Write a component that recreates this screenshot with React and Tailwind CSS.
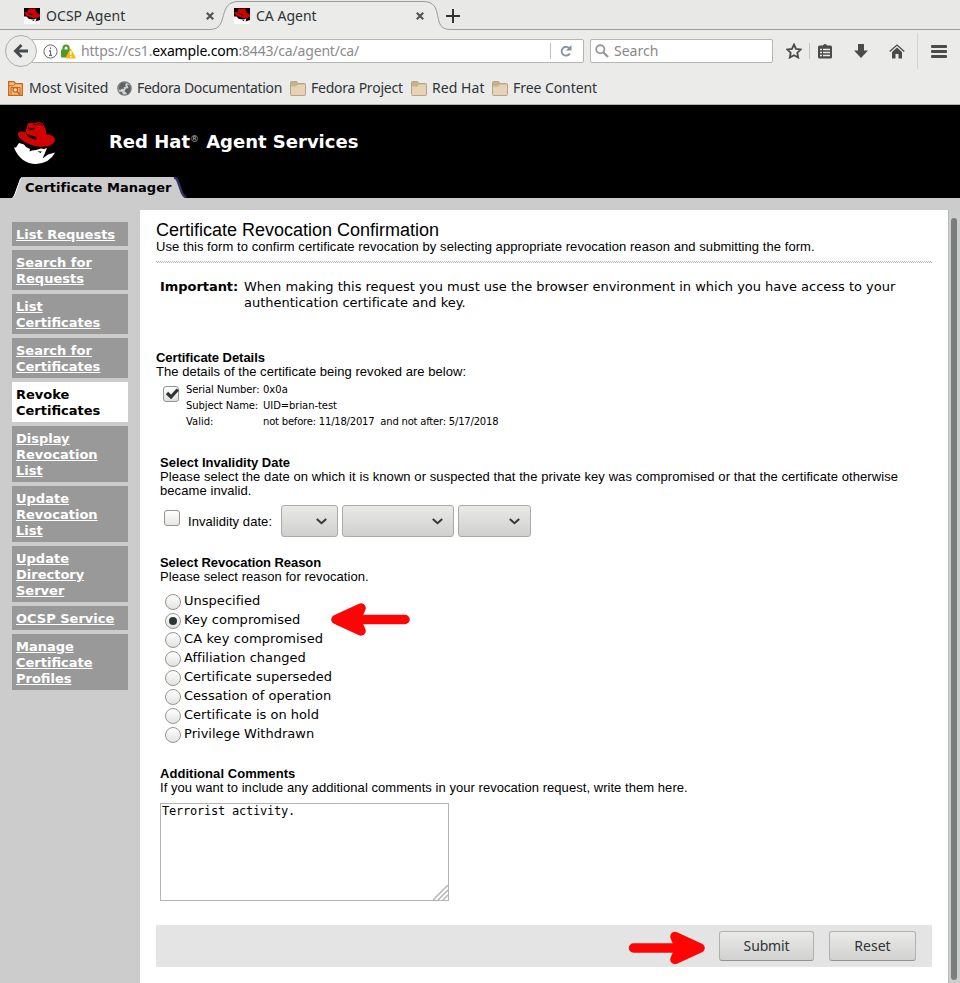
import React from "react";

const UI = "font-['Noto_Sans',sans-serif]";
const DJ = "font-['DejaVu_Sans',sans-serif]";
const ARIAL = "font-['Liberation_Sans',sans-serif]";

function Hat({ className }) {
  return (
    <svg viewBox="0 0 42 42" className={className}>
      <path fill="#fff" d="M0 25.500 L2 25.500 L5 21 L10 22.500 L12 25 L16 27 L15.500 29.500 L18 28.500 L22 28 L27 26.500 L30 27 L33 26 L31 31 L28.500 36.500 L34 32.500 L41 30.500 Q36 41 22 42 C12 42 4 36 0 25.500 Z" />
      <path fill="#d50000" d="M13.500 2 C16 0 18 1.500 21 1 C24 -.3 28 -.2 29.500 2.500 C31 6 32.500 9 32.500 12.500 C37 12.500 41 14.500 41 18 C40 23 34 24.700 28 24.700 C18 25 6 19 4 13 C3.500 9.500 7 8.500 11.500 10.500 Z" />
      <path d="M11.500 10.500 C14 13.500 19 13.500 22 15 C25 18.500 19 17.500 17 16 C14 15 12.500 13.500 11.500 10.500Z M14 4.500 L15.500 6.500 L21 5.500 L20.500 7 L17.500 8 L14 7Z M23.500 29.200 L28 29.500 L26.500 31Z" />
      <path d="M19 1.800 Q22 4 25.500 1.800 L29 3.500" stroke="#000" strokeWidth=".8" fill="none" />
    </svg>
  );
}

function Favicon() {
  return (
    <div className="h-4 w-4 shrink-0 overflow-hidden bg-black">
      <svg viewBox="0 0 16 16" className="h-4 w-4">
        <path fill="#fff" d="M0 8.500 L2.500 8.500 L5 11 L9 11.500 L12.500 10.500 L11.500 13.500 L16 12 V16 H0Z" />
        <path fill="#d00000" d="M4.500 .5 L8 1 L11 .3 L13 5 L16 6.500 V8.500 L13 10 H9 L3 8 L0 5 L1 4 L3.500 4.300Z" />
        <path d="M4 4.500 L6 5.500 L9 6.300 L8 7.200 L5 6.300Z M8 12 L11 11.800 L9.500 13Z" />
      </svg>
    </div>
  );
}

const Close = () => (
  <svg viewBox="0 0 8 8" className="h-2 w-2 shrink-0">
    <path d="M.8 .8 L7.200 7.200 M7.200 .8 L.8 7.200" stroke="#50565a" strokeWidth="2.200" />
  </svg>
);

const Folder = () => (
  <svg viewBox="0 0 16 15" className="h-[15px] w-4 shrink-0">
    <path d="M.5 1.500 Q.5 .5 1.500 .5 H6.500 L8 2.500 H14.500 Q15.500 2.500 15.500 3.500 V13.500 Q15.500 14.500 14.500 14.500 H1.500 Q.5 14.500 .5 13.500Z" fill="#c4b290" stroke="#b6a583" />
    <path d="M1 5.500 H6 L8 3.500 H15 V14 H1Z" fill="#e6d2b5" />
  </svg>
);

const MostVisited = () => (
  <svg viewBox="0 0 15 15" className="h-[15px] w-[15px] shrink-0" fill="none">
    <path d="M.7 .7 H6 L7.500 2.700 H14.300 V14.300 H.7Z" fill="#f3bd88" stroke="#cb6510" strokeWidth="1.300" />
    <path d="M1 4.700 H5.500 L7 2.800 M3 13.500 V6.500 H12 V13.500" stroke="#cb6510" />
    <circle cx="7.300" cy="8.800" r="2.300" stroke="#cb6510" strokeWidth="1.300" fill="#fbe4cc" />
    <path d="M9 10.500 L12 13.500" stroke="#cb6510" strokeWidth="1.600" />
  </svg>
);

const Globe = () => (
  <svg viewBox="0 0 15 15" className="h-[15px] w-[15px] shrink-0">
    <circle cx="7.500" cy="7.500" r="6.700" fill="#cfd0d0" stroke="#77797b" strokeWidth="1.200" />
    <path d="M2 5 L4 2 L7 1.300 L9.500 2 L8 4 L9 5.500 L6.500 6.500 L7 8 L5 7.800 L3 9 L1.500 8Z M10 3.500 L12.500 4 L14 7 L13 11 L10.500 13.500 L9 11.500 L7.500 10 L9 7.500 L11.500 7Z M2.500 10.500 L5 11 L6 13.500 L4 12.800Z" fill="#5f6264" />
  </svg>
);

const BOOKMARKS = [
  { label: "Most Visited", icon: MostVisited, box: "w-[109px] gap-[6px]", text: "tracking-[-0.1px]" },
  { label: "Fedora Documentation", icon: Globe, box: "w-[173px] gap-[5px]", text: "tracking-[-0.33px]" },
  { label: "Fedora Project", icon: Folder, box: "w-[121px] gap-[5px]", text: "tracking-[-0.23px]" },
  { label: "Red Hat", icon: Folder, box: "w-[81px] gap-[5px]", text: "tracking-[0.05px]" },
  { label: "Free Content", icon: Folder, box: "w-[120px] gap-[5px]", text: "tracking-[-0.06px]" },
];

function TabBar() {
  return (
    <div className="relative h-[30px] bg-[#e8e8e7]">
      <svg viewBox="0 0 960 30" className="absolute inset-0 h-[30px] w-[960px]">
        <path d="M0 29.500 H210 C230 29.500 216 1.500 239 1.500 H423 C446 1.500 430 29.500 450 29.500 H960 V31 H0Z" fill="#ebebea" />
        <path d="M0 29.500 H210 C230 29.500 216 1.500 239 1.500 H423 C446 1.500 430 29.500 450 29.500 H960" fill="none" stroke="#999c98" />
      </svg>
      <div className="relative flex h-8 items-center text-[14px] text-[#2e3436]">
        <div className="flex w-[210px] items-center pl-6">
          <Favicon />
          <span className="-mt-[2px] ml-[6px] w-[160px] shrink-0 tracking-[0.05px]">OCSP Agent</span>
          <Close />
        </div>
        <div className="flex w-[210px] items-center pl-6">
          <Favicon />
          <span className="-mt-[2px] ml-[6px] w-[160px] shrink-0">CA Agent</span>
          <Close />
        </div>
        <svg viewBox="0 0 14 14" className="ml-[26px] h-[14px] w-[14px]">
          <path d="M7 0 V14 M0 7 H14" stroke="#2e3436" strokeWidth="2" />
        </svg>
      </div>
    </div>
  );
}

function NavBar() {
  return (
    <div className="flex h-[42px] items-center bg-[#ebebea] pl-[5px]">
      <div className="z-10 flex h-8 w-8 shrink-0 items-center justify-center rounded-full border border-[#aeb0ac] bg-[#ebebea]">
        <svg viewBox="0 0 16 16" className="h-4 w-4">
          <path d="M15 8 H3 M8.500 2 L2.500 8 L8.500 14" fill="none" stroke="#474b4d" strokeWidth="2.900" />
        </svg>
      </div>
      <div className="-ml-[6px] flex h-6 w-[553px] shrink-0 items-center rounded-[2px] border border-[#b3b5b0] bg-white pl-[11px] text-[14px]">
        <svg viewBox="0 0 15 15" className="h-[15px] w-[15px] shrink-0">
          <circle cx="7.500" cy="7.500" r="6.600" fill="none" stroke="#6a6a6a" />
          <path d="M7.500 3.500 V5 M7.500 6.300 V11.500 M6 6.800 H7.500 M6 11.300 H9" stroke="#666" strokeWidth="1.200" />
        </svg>
        <svg viewBox="0 0 15 15" className="ml-[3px] h-[15px] w-[15px] shrink-0">
          <path d="M2.500 7 V4.500 Q2.500 1.500 5 1.500 Q7.700 1.500 7.700 4.500 V7" fill="none" stroke="#4e9a26" strokeWidth="2.200" />
          <rect x="0" y="5.500" width="9.500" height="8" rx="1" fill="#4e9a26" />
          <path d="M9.500 5 L14.500 14 H5Z" fill="#fcb90a" stroke="#fcb90a" strokeLinejoin="round" />
          <path d="M9.700 7 V11 M9.700 12 V13.500" stroke="#fff" strokeWidth="1.500" />
        </svg>
        <span className="-mt-[2px] ml-[5px] w-[469px] whitespace-nowrap tracking-[-0.18px] text-[#8b8b8b]">
          https://cs1.<span className="text-black">example.com</span>:8443/ca/agent/ca/
        </span>
        <span className="h-4 w-px bg-[#bdbfc0]" />
        <svg viewBox="0 0 12 12" className="ml-[9px] h-3 w-3 shrink-0">
          <path d="M9.500 3.500 A4.400 4.400 0 1 0 9.800 8.500" fill="none" stroke="#8493a5" strokeWidth="1.900" />
          <path d="M11.500 0 V5.500 H6Z" fill="#8493a5" />
        </svg>
      </div>
      <div className="ml-[6px] flex h-6 w-[183px] shrink-0 items-center rounded-[2px] border border-[#b3b5b0] bg-white pl-1 text-[14px] text-[#888]">
        <svg viewBox="0 0 14 14" className="h-[14px] w-[14px]">
          <circle cx="5.300" cy="5.300" r="4.100" fill="none" stroke="#999" strokeWidth="1.900" />
          <path d="M8.300 8.300 L13 13" stroke="#999" strokeWidth="2.300" />
        </svg>
        <span className="-mt-[2px] ml-[5px]">Search</span>
      </div>
      <svg viewBox="0 0 16 16" className="ml-[13px] h-4 w-4 shrink-0">
        <path d="M8 1.500 L10 5.800 L14.700 6.400 L11.300 9.700 L12.200 14.500 L8 12.200 L3.800 14.500 L4.700 9.700 L1.300 6.400 L6 5.800Z" fill="none" stroke="#4b4b4b" strokeWidth="1.800" />
      </svg>
      <span className="ml-[7px] h-4 w-px shrink-0 bg-[#c5c7c5]" />
      <svg viewBox="0 0 14 15" className="ml-[8px] h-[15px] w-[14px] shrink-0">
        <path d="M4.500 1.500 L7 -.3 L9.500 1.500 H12.500 Q14 1.500 14 3 V13 Q14 14.500 12.500 14.500 H1.500 Q0 14.500 0 13 V3 Q0 1.500 1.500 1.500Z" fill="#4b4b4b" />
        <path d="M2 5.500 H4 M5 5.500 H12 M2 8.500 H4 M5 8.500 H12 M2 11.500 H4 M5 11.500 H12" stroke="#ebebea" strokeWidth="1.500" />
      </svg>
      <svg viewBox="0 0 14 14" className="ml-[22px] h-[14px] w-[14px] shrink-0">
        <path d="M4 0 H10 V6.500 H14 L7 14 L0 6.500 H4Z" fill="#4b4b4b" />
      </svg>
      <svg viewBox="0 0 16 15" className="ml-[21px] h-[15px] w-4 shrink-0">
        <path d="M.7 7.500 L8 1 L15.300 7.500" fill="none" stroke="#4b4b4b" strokeWidth="1.300" />
        <path d="M3 8 L8 3.500 L13 8 V14.500 H9.500 V10 H6.500 V14.500 H3Z" fill="#4b4b4b" />
      </svg>
      <span className="ml-[12px] h-9 w-px shrink-0 bg-[#d3d4d2]" />
      <div className="ml-[13px] flex w-4 flex-col gap-[2px]">
        <span className="h-[3px] rounded-[1px] bg-[#4b4b4b]" />
        <span className="h-[3px] rounded-[1px] bg-[#4b4b4b]" />
        <span className="h-[3px] rounded-[1px] bg-[#4b4b4b]" />
      </div>
    </div>
  );
}

function Bookmarks() {
  return (
    <div className="flex h-[33px] items-center border-b border-[#b2b4ae] bg-[#ebebea] pl-2 text-[14px] text-[#2e3436]">
      {BOOKMARKS.map(({ label, icon: Icon, box, text }) => (
        <div key={label} className={"flex items-center whitespace-nowrap " + box}>
          <Icon />
          <span className={"-mt-[2px] " + text}>{label}</span>
        </div>
      ))}
    </div>
  );
}

const MENU = [
  ["List Requests"],
  ["Search for", "Requests"],
  ["List", "Certificates"],
  ["Search for", "Certificates"],
  ["Revoke", "Certificates"],
  ["Display", "Revocation", "List"],
  ["Update", "Revocation", "List"],
  ["Update", "Directory", "Server"],
  ["OCSP Service"],
  ["Manage", "Certificate", "Profiles"],
];

const REASONS = [
  "Unspecified",
  "Key compromised",
  "CA key compromised",
  "Affiliation changed",
  "Certificate superseded",
  "Cessation of operation",
  "Certificate is on hold",
  "Privilege Withdrawn",
];

function Dropdown({ className }) {
  return (
    <div className={"flex h-8 items-center justify-end rounded-[3px] border border-[#a9aba6] bg-linear-to-b from-[#e9e9e8] to-[#d0d1cf] " + className}>
      <svg viewBox="0 0 11 7" className="h-[7px] w-[11px]">
        <path d="M.8 1 L5.500 5.200 L10.200 1" fill="none" stroke="#34393b" strokeWidth="2" />
      </svg>
    </div>
  );
}

function Arrow({ className, d }) {
  return (
    <svg viewBox="0 0 80 34" className={"absolute h-[34px] w-20 " + className}>
      <path d={d} fill="#fd0505" stroke="#fd0505" strokeWidth="9.500" strokeLinejoin="round" strokeLinecap="round" />
    </svg>
  );
}

const BUTTON =
  "flex h-[30px] items-center justify-center rounded-[3px] border border-[#b0b2ad] border-b-[#92958f] bg-linear-to-b from-[#eaeae9] to-[#d1d2d0] text-[14px] text-[#2e3436] font-['Noto_Sans',sans-serif]";

export default function App() {
  return (
    <div className={"relative h-[983px] w-[960px] overflow-hidden bg-[#cccccc] text-black " + UI}>
      <TabBar />
      <NavBar />
      <Bookmarks />

      <header className={"flex h-[93px] flex-col bg-black font-bold " + DJ}>
        <div className="flex h-[72px] items-start">
          <Hat className="ml-[14px] mt-[17px] h-[42px] w-[42px]" />
          <h1 className="ml-[53px] mt-[26px] whitespace-nowrap text-[18px] leading-[22px] text-white">
            Red Hat<sup className="relative -top-[6px] align-baseline text-[9px] font-normal leading-none text-[#bbb] tracking-[0.8px]">®</sup> Agent Services
          </h1>
        </div>
        <div className="relative ml-3 h-[21px] w-[176px]">
          <svg viewBox="0 0 176 21" className="absolute inset-0 h-[21px] w-[176px]">
            <path d="M0 21 Q2 20 3 17 L8 3 Q9 0 11 0 H161 Q164 0 166 5 L170 16 Q172 21 175 21Z" fill="#cccccc" />
            <path d="M.5 20.500 Q2 20 3 17 L8 3 Q8.500 1 10 .5" fill="none" stroke="#fff" />
            <path d="M162 .5 Q165 1 166 5 L170 16 Q172 20 174 20.500" fill="none" stroke="#333366" strokeWidth="2.400" />
          </svg>
          <div className="relative whitespace-nowrap pl-[13px] text-[13px] leading-[21px] tracking-[0.03px]">Certificate Manager</div>
        </div>
      </header>

      <div className="flex h-[785px] pt-3">
        <nav className={"flex w-[140px] flex-col gap-1 px-3 pt-3 text-[13px] font-bold leading-4 " + DJ}>
          {MENU.map((lines, i) => (
            <a
              key={i}
              className={
                i === 4
                  ? "block bg-white px-1 pb-[3px] pt-[5px] text-black"
                  : "block bg-[#999999] px-1 pb-[3px] pt-[5px] text-white underline"
              }
            >
              {lines.map((l) => (
                <span key={l} className="block">{l}</span>
              ))}
            </a>
          ))}
        </nav>

        <main className={"flex w-[808px] flex-col bg-white pl-4 text-[13px] leading-[14px] " + ARIAL}>
          <h2 className="mt-[10px] text-[18px] leading-5">Certificate Revocation Confirmation</h2>
          <p className="tracking-[0.06px]">Use this form to confirm certificate revocation by selecting appropriate revocation reason and submitting the form.</p>
          <svg className="mt-[7px] h-[3px] w-[776px]">
            <defs>
              <pattern id="dots" width="2" height="2" patternUnits="userSpaceOnUse">
                <rect width="1" height="1" fill="#bbb" />
                <rect x="1" y="1" width="1" height="1" fill="#bbb" />
              </pattern>
            </defs>
            <rect width="776" height="2" fill="url(#dots)" />
          </svg>
          <div className={"mt-[15px] flex pl-1 leading-4 " + DJ}>
            <b className="w-[84px] tracking-[-0.05px]">Important:</b>
            <p className="tracking-[-0.01px]">
              When making this request you must use the browser environment in which you have access to your
              <br />
              authentication certificate and key.
            </p>
          </div>

          <b className="mt-10 tracking-[-0.05px]">Certificate Details</b>
          <p className="tracking-[0.04px]">The details of the certificate being revoked are below:</p>
          <div className="mt-[3px] flex h-12 pl-[7px]">
            <div className="mt-1 h-4 w-4 rounded-[3px] border border-[#949691] bg-linear-to-b from-white to-[#dededc]">
              <svg viewBox="0 0 14 14" className="h-[14px] w-[14px] overflow-visible">
                <path d="M3 6 L7 10 L13.800 2.500" fill="none" stroke="#2e3436" strokeWidth="3.200" />
              </svg>
            </div>
            <div className={"ml-[7px] grid grid-cols-[77px_auto] text-[10px] leading-4 " + DJ}>
              <span className="tracking-[-0.1px]">Serial Number:</span><span>0x0a</span>
              <span className="tracking-[-0.1px]">Subject Name:</span><span className="tracking-[-0.07px]">UID=brian-test</span>
              <span>Valid:</span><span className="whitespace-pre tracking-[-0.205px]">not before: 11/18/2017  and not after: 5/17/2018</span>
            </div>
          </div>

          <section className="mt-[26px] pl-1">
            <b className="block">Select Invalidity Date</b>
            <p className="whitespace-nowrap tracking-[0.082px]">
              Please select the date on which it is known or suspected that the private key was compromised or that the certificate otherwise
              <br />
              became invalid.
            </p>
            <div className="mt-[7px] flex h-8 pl-1">
              <div className="mt-[5px] h-4 w-4 rounded-[3px] border border-[#949691] bg-linear-to-b from-white to-[#e6e6e5]" />
              <span className="ml-2 mt-[10px] w-[93px] tracking-[0.06px]">Invalidity date:</span>
              <Dropdown className="w-[57px] pr-[10px]" />
              <Dropdown className="ml-1 w-[112px] pr-[10px]" />
              <Dropdown className="ml-1 w-[73px] pr-[10px]" />
            </div>
          </section>

          <section className="mt-[19px] pl-1">
            <b className="block tracking-[-0.06px]">Select Revocation Reason</b>
            <p className="tracking-[0.055px]">Please select reason for revocation.</p>
            <div className={"mt-[7px] flex flex-col pl-[5px] " + DJ}>
              {REASONS.map((r, i) => (
                <div key={r} className="flex h-[19px]">
                  <div className="mt-[3px] flex h-4 w-4 items-center justify-center rounded-full border border-[#949691] bg-linear-to-b from-white to-[#e2e2e1]">
                    {i === 1 && <span className="h-2 w-2 rounded-full bg-[#2e3436]" />}
                  </div>
                  <span className={"ml-[3px] leading-[19px] " + (i === 2 ? "tracking-[0.1px]" : "tracking-[0.02px]")}>{r}</span>
                </div>
              ))}
            </div>
          </section>

          <section className="mt-[24px] pl-1">
            <b className="block tracking-[0.05px]">Additional Comments</b>
            <p className="tracking-[0.05px]">If you want to include any additional comments in your revocation request, write them here.</p>
            <div className="mt-2 flex h-[98px] w-[289px] items-end justify-between border border-[#b4b4b4] font-['DejaVu_Sans_Mono',monospace] text-[12px]">
              <span className="self-start pl-px leading-[15px] tracking-[-0.22px]">Terrorist activity.</span>
              <svg viewBox="0 0 15 15" className="h-[15px] w-[15px]">
                <path d="M0 15 L15 0 M5 15 L15 5 M10 15 L15 10" stroke="#b4b4b4" strokeWidth="1.500" />
              </svg>
            </div>
          </section>

          <div className="mt-6 flex h-[42px] w-[776px] justify-end bg-[#e4e4e4] pr-4 pt-[6px]">
            <div className={BUTTON + " w-[95px]"}>
              <span className="tracking-[-0.15px]">Submit</span>
            </div>
            <div className={BUTTON + " ml-[15px] w-[87px]"}>Reset</div>
          </div>
        </main>

        <div className="flex w-3 border-l border-[#b9bbb9] bg-[#cccecd] pl-[2px] pt-2">
          <div className="h-[762px] w-[6px] rounded-full bg-[#797d7d]" />
        </div>
      </div>

      <Arrow className="left-[331px] top-[602px]" d="M5 17.500 L30 6 L25 17.500 L30 29 Z M26 17.500 H74" />
      <Arrow className="left-[625px] top-[931px]" d="M75 17 L50 5.500 L55 17 L50 28.500 Z M8.500 17 H54" />
    </div>
  );
}
